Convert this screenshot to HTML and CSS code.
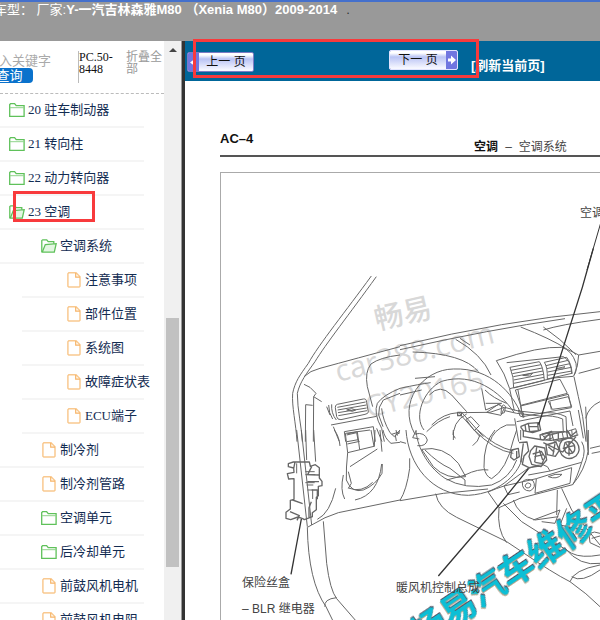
FILE: index.html
```html
<!DOCTYPE html>
<html lang="zh-CN">
<head>
<meta charset="utf-8">
<title>森雅M80 空调</title>
<link rel="stylesheet" href="styles.css">
</head>
<body>
<svg class="defs" aria-hidden="true">
  <symbol id="folder" viewBox="0 0 16 14">
    <path d="M.7 12.5V1.6L1.6.7h4l1.6 2h7.9v10.6H.7z" fill="#fff" stroke="#5fc15a" stroke-width="1.3"/>
    <path d="M1 4.7h14" stroke="#8fd48b"/>
  </symbol>
  <symbol id="folder-open" viewBox="0 0 16 14">
    <path d="M.8 13V1.5L1.7.8h4l1.5 1.9h5.6v2" fill="#fff" stroke="#5fc15a" stroke-width="1.3"/>
    <path d="M1.2 13.2L4.3 5.6l10.9-.9-1.9 8.5z" fill="#e3f6e2" stroke="#5fc15a" stroke-width="1.3"/>
  </symbol>
  <symbol id="file" viewBox="0 0 14 16">
    <path d="M1.8.8H9l4 4v9.4l-.9.9H1.8l-.9-.9V1.7z" fill="#fff" stroke="#f9c990" stroke-width="1.5"/>
    <path d="M8.7 1v4.2H13" fill="none" stroke="#f7b467" stroke-width="1.2"/>
  </symbol>
</svg>
<header class="topbar">
  <h1 class="title">车型： 厂家:<b>Y-一汽吉林森雅M80 （Xenia M80）2009-2014</b><span class="dot">.</span></h1>
</header>
<main class="frames">
  <aside class="sidebar">
    <div class="pane">
      <form class="search">
        <div class="query">
          <input class="keyword" type="text" aria-label="关键字" placeholder="输入关键字">
          <button class="go" type="button">查询</button>
        </div>
        <span class="code">PC.50-8448</span>
        <a class="fold" href="#">折叠全部</a>
      </form>
      <ul class="tree">
        <li class="node"><svg class="icon"><use href="#folder"/></svg><a href="#">20 驻车制动器</a></li>
        <li class="node"><svg class="icon"><use href="#folder"/></svg><a href="#">21 转向柱</a></li>
        <li class="node"><svg class="icon"><use href="#folder"/></svg><a href="#">22 动力转向器</a></li>
        <li class="node"><svg class="icon"><use href="#folder-open"/></svg><a href="#">23 空调</a><span class="mark mark-node"></span></li>
        <li class="node second"><svg class="icon"><use href="#folder-open"/></svg><a href="#">空调系统</a></li>
        <li class="node third"><svg class="icon"><use href="#file"/></svg><a href="#">注意事项</a></li>
        <li class="node third"><svg class="icon"><use href="#file"/></svg><a href="#">部件位置</a></li>
        <li class="node third"><svg class="icon"><use href="#file"/></svg><a href="#">系统图</a></li>
        <li class="node third"><svg class="icon"><use href="#file"/></svg><a href="#">故障症状表</a></li>
        <li class="node third"><svg class="icon"><use href="#file"/></svg><a href="#">ECU端子</a></li>
        <li class="node second"><svg class="icon"><use href="#file"/></svg><a href="#">制冷剂</a></li>
        <li class="node second"><svg class="icon"><use href="#file"/></svg><a href="#">制冷剂管路</a></li>
        <li class="node second"><svg class="icon"><use href="#folder"/></svg><a href="#">空调单元</a></li>
        <li class="node second"><svg class="icon"><use href="#folder"/></svg><a href="#">后冷却单元</a></li>
        <li class="node second"><svg class="icon"><use href="#file"/></svg><a href="#">前鼓风机电机</a></li>
        <li class="node second"><svg class="icon"><use href="#file"/></svg><a href="#">前鼓风机电阻</a></li>
      </ul>
    </div>
    <div class="scroll"><span class="up"></span><span class="thumb"></span></div>
  </aside>
  <section class="content">
    <nav class="toolbar">
      <button class="pager prev" type="button"><svg class="arrow" viewBox="0 0 11 16"><path d="M8 4L2 8.500l6 4.500z" fill="#fff"/></svg><span class="word">上一 页</span></button>
      <button class="pager next" type="button"><span class="word">下一 页</span><svg class="arrow" viewBox="0 0 11 16"><path d="M2 6.500h3V3.500L10 8l-5 4.500V9.500H2z" fill="#fff"/></svg></button>
      <a class="refresh" href="#">[刷新当前页]</a>
      <span class="mark mark-pager"></span>
    </nav>
    <article class="sheet">
      <header class="heading"><strong class="number">AC–4</strong><span class="chapter"><b>空调</b> –  空调系统</span></header>
      <figure class="figure">
        <svg class="drawing" viewBox="221 173 379 447" preserveAspectRatio="xMinYMin slice" role="img" aria-label="空调部件位置">
          <g class="ghost">
            <text x="377" y="330" font-size="29" transform="rotate(-13 377 330)">畅易</text>
            <text x="338" y="382" font-size="30" transform="rotate(-14 338 382)">car388.com</text>
            <text x="368" y="418" font-size="30" transform="rotate(-14 368 418)">CY20165</text>
          </g>
          <!-- left pillar, dash edge and left vent -->
          <g class="ink" transform="translate(200 250) scale(.33333)">
            <path d="M514 78C440 180 355 285 325 340C300 375 285 395 278 430C275 470 288 520 291 575"/>
            <path d="M529 80C450 190 375 285 345 335C320 370 300 395 292 430C292 480 305 530 307 575"/>
            <path d="M312 380Q330 362 360 355Q470 325 600 290M312 403L330 412 348 430 341 440 365 455M341 440L340 575M316 575L317 464 338 466"/>
            <path d="M600 315Q540 322 513 342Q494 365 502 410L518 470"/>
            <path d="M600 415Q550 435 532 460Q520 490 545 535L553 575M600 430L550 450 Q534 470 536 495L549 530"/>
            <path d="M412 463L490 447Q500 445 500 458L505 486Q505 491 495 493L423 509Q412 510 410 500L406 473Q405 465 412 463zM412 472L497 456M413 480L499 465M414 488L500 474M415 497L501 482M440 480l15-4 12 4-10 4zM395 463Q393 490 409 510M386 465Q386 490 398 507M380 470L390 495M393 525L530 499M400 530L418 575M433 545L520 530 526 575M433 545L437 575M440 555l30-7 5 27M530 535l16 40"/>
            <path d="M545 475Q548 510 570 548L583 560 600 540M600 548l-14 8 3 17"/>
          </g>
          <!-- windscreen base, wheel rim, centre vents and stack -->
          <g class="ink" transform="translate(400 250) scale(.33333)">
            <path d="M0 287Q310 212 600 185M0 299Q270 238 495 206M362 231Q450 265 502 298L536 315 600 304M430 231Q480 265 528 314M430 240Q480 224 600 208M167 268Q245 312 273 375M180 265L210 285M38 306Q190 310 235 365M0 415Q60 402 92 398M0 435L65 420M45 385L105 380"/>
            <path d="M45 553C-10 455 70 358 160 357C275 352 340 435 362 490"/>
            <path d="M72 540C40 500 70 420 125 394C220 365 300 425 342 487"/>
            <path d="M88 435Q120 400 155 435L200 485M95 525Q130 490 175 488L270 487 314 472M80 545Q115 510 150 500M178 490L240 560M185 487L250 560M198 508l15-8 25 27-15 15zM160 570Q155 515 200 492M245 415l12 65 48-20-48 0M255 420q25 25 65 40M270 575Q280 540 320 525L345 525"/>
            <path d="M289 332Q420 288 485 292Q515 300 528 340Q532 365 520 379L460 384 329 416Q315 370 289 332zM320 338L490 320Q512 330 516 372M330 352L418 335Q430 350 433 391L341 414Q342 380 330 352zM433 337L500 322Q515 342 516 370L442 387Q443 350 433 337zM333 361L423 344M337 371L427 354M340 380L429 363M341 390L431 373M341 400L432 382M438 347L504 331M440 356L510 341M443 366L514 352M443 376L516 363M368 376l30-6-9 8zM468 356l27-6-8 7z"/>
            <path d="M346 420L480 388 502 430 362 466zM362 468L505 433 514 473 368 500zM445 454l60-14 10 30-58 8zM450 455l4 24M354 420l14 80M329 417l14 65M522 380Q535 440 548 500L558 575M535 480l15 85M557 505Q566 470 600 455M557 470l5 105M536 315Q535 350 522 376M536 370L600 353"/>
            <path d="M314 472L355 483 420 490Q465 483 498 500L500 548M315 482L350 490 420 498Q460 495 488 507L490 548M305 470q5-10 12 0l-4 18-10 3zM260 487l35-24 18 11-10 22zM355 480l15 8 2 14-12-4z"/>
            <path stroke-width="4" d="M363 529l22-9 32-2 5 22-24 8-28-6-7-9zM375 523l3 22M385 520l4 25 26-3-2-23M388 530h25"/>
            <path d="M344 505l12 70M350 515l160-32 9 45M425 552l30-8 3 20-20 5zM456 552l30-7 5 23-29 6zM505 543l22-7 5 18-20 8zM515 540l2 17M430 560l65-16M475 575l60-20"/>
            <path class="leader" d="M580 -5L547 112 416 524"/>
            <path d="M173 487h11v10h-11z" stroke-width="4"/>
          </g>
          <!-- fuse box, kick panel and left duct -->
          <g class="ink" transform="translate(200 430) scale(.33333)">
            <path d="M290 0L322 290M304 0L335 285M317 0L320 90M341 0L347 95M403 0Q418 20 420 48M436 10L510 0M436 10L443 68 522 49 513 0M441 35l34-6M442 42l37-8M440 12l32-7 7 54M443 68q-5 45-4 82Q455 190 490 180Q527 165 546 130L547 102M525 0l-2 50M540 0l6 65M532 57L450 110M600 210L415 248Q375 260 335 285L322 292M407 175Q390 250 352 268M430 135Q420 180 434 207M445 125l9 35-9 15M518 157Q485 190 445 174M545 102Q535 195 465 210M549 0q5 25 24 40l27-3M575 13l25-8M588 0l4 17"/>
            <path stroke-width="4" d="M265 101l15-5 48 0 3 13 15-5 12 9v31l8 10v13l-11 2v28l-6 5v37l-12 9v12l-24 9-5-3-14-5-22 8-14-4 0-18 13-10V211l11-3V146l-16 1-4-16 20-4-1-13-16-4zM285 96l-4 20M278 210l30 11M270 245l28 12-7 14M335 110l-12 24 34 1M322 155h35M335 180h17v28M334 215l-7 18v30"/>
            <path d="M316 125h28M316 134h30M316 158h28M320 165h20M322 180h16v27M290 100v30"/>
            <path class="leader" d="M304 267L273 433"/>
            <path d="M322 292Q325 455 378 530L400 575M370 274L380 400Q390 480 410 506L470 575M375 531Q370 507 410 503"/>
          </g>
          <!-- lower wheel, steering column, heater controls and console -->
          <g class="ink" transform="translate(400 430) scale(.33333)">
            <path d="M18 0C25 105 95 195 205 196C310 190 360 120 366 85M48 0C50 40 75 105 135 145Q195 180 275 165Q330 145 350 90M29 85L29 115Q20 180 0 211M0 212L130 190 264 177M0 35l18 5M45 12Q75 5 82 30Q78 50 52 47M48 3l-10 20 20 4"/>
            <path d="M65 58Q130 45 175 100L197 140Q140 150 100 110zM75 60Q115 100 150 115L195 150v15M195 135Q235 115 265 120M140 150l57-15M160 0q-5 15 6 25M240 15q-5 20-22 32"/>
            <path d="M285 0Q250 40 252 112Q257 140 275 146Q320 120 340 30L350 0M223 0Q280 60 340 70M233 0Q285 50 340 63M362 0v30M560 0l4 65Q555 120 518 164M565 0v75M570 55l30-7M575 70l25-5"/>
            <path stroke-width="4" d="M370 0v20l60 10 25-27M357 38l24-2 5 27-14 15-5 25 20 10 30-5M335 60l20-5 3 25-16 10-10-8zM370 40l-8 57M350 63v22M392 62l12-14 30 6 6 36-17 20-28-7-8-24zM398 72l26-8 11 17-9 20-20-4M410 52l-6 45M418 60l10 30M403 80l28-6M438 45l30-9 10 25-12 18-24-5zM445 50l18 17M465 40l-6 35M487 30q25-15 44 8Q545 60 528 78Q505 95 485 74Q470 50 487 30zM495 38q18-9 28 7 7 26-18 26-19-8-10-33zM507 34v43M488 55l37-9M498 40l21 31M420 15l35-9 45-1 3 18-50 8-31-2zM450 10v20M475 6v20M500 0l13 18 18-15M430 38l58 28 40-46"/>
            <path d="M387 115Q440 90 450 123L385 135M450 123L545 97Q560 60 545 35M545 97Q530 145 518 164L360 205 297 233 264 186Q290 175 312 168L384 115M409 146L515 113 510 160 405 190zM312 168L409 146M312 168l12 26 35-8M367 155q15-12 32-3 12 20-9 31-25 0-23-28zM375 168q5-14 17-6 2 12-12 12zM445 140q20-10 41-7-15 17-41 7"/>
            <path d="M297 233Q290 300 320 338M107 191Q115 235 170 262L320 335 365 365Q460 430 510 455Q560 490 600 530M310 220L365 275 515 370Q545 385 600 375M340 210Q355 255 405 270L475 260M400 270L480 240 465 280 425 275M472 180l-2 75M485 175L515 240 600 345M500 235l-20 50 70 15M495 355Q540 410 600 400M510 455Q520 420 600 405M515 440q30 20 85-20M600 310q-40-15-30 28l30 14M575 325l25-7"/>
            <path class="leader" d="M386 115L295 228 115 438"/>
          </g>
          <path class="leader" d="M601 222L587 270"/>
          <text class="stamp" x="422" y="648" font-size="35" transform="rotate(-34 422 648)">畅易汽车维修平台</text>
          <g class="callout">
            <text x="580" y="217" font-size="12">空调</text>
            <text x="242" y="587" font-size="12">保险丝盒</text>
            <text x="242" y="613" font-size="12">– BLR 继电器</text>
            <text x="396" y="592" font-size="12">暖风机控制总成</text>
          </g>
        </svg>
      </figure>
    </article>
  </section>
</main>
</body>
</html>
```
FILE: styles.css
```css
* { box-sizing: border-box; }
body {
  margin: 0;
  height: 100vh;
  display: flex;
  flex-direction: column;
  overflow: hidden;
  background: #fff;
  font: 13px/16px "Liberation Serif", "Noto Sans CJK SC", serif;
}
a { color: inherit; text-decoration: none; }
button { border: 0; padding: 0; margin: 0; font: inherit; }
.defs { display: none; }

.topbar {
  flex: none;
  height: 41px;
  border-top: 2px solid #4470cc;
  background: #999;
  color: #fff;
}
.title {
  margin: 0 0 0 -6px;
  font: 13px/16px "Liberation Sans", "Noto Sans CJK SC", sans-serif;
  white-space: pre;
}
.dot { margin-left: 9px; color: #333; }

.frames { flex: 1; min-height: 0; display: flex; }
.sidebar {
  flex: none;
  width: 185px;
  display: flex;
  border-right: 3px solid #333;
  overflow: hidden;
}
.pane { flex: 1; min-width: 0; overflow: hidden; }
.search {
  height: 53px;
  display: flex;
  align-items: flex-start;
  padding-top: 10px;
  border-bottom: 1px dashed #bbb;
}
.query { width: 78px; margin-left: -14px; padding-top: 2px; display: flex; flex-direction: column; align-items: flex-start; }
.keyword {
  width: 78px;
  height: 15px;
  padding: 0;
  border: 0;
  background: none;
  font: inherit;
}
.keyword::placeholder { color: #aaa; opacity: 1; }
.go {
  width: 47px;
  height: 15px;
  border-radius: 4px;
  background: #0a72cc;
  color: #fff;
  line-height: 14px;
}
.code {
  width: 42px;
  margin-left: 14px;
  border-left: 1px solid #bbb;
  height: 32px;
  font-size: 12px;
  line-height: 12px;
  color: #111;
}
.fold { margin-left: 6px; width: 38px; font-size: 12px; line-height: 12px; color: #999; }

.tree { list-style: none; margin: 0; padding: 0; width: 144px; }
.node {
  position: relative;
  display: flex;
  align-items: center;
  gap: 3px;
  height: 34px;
  padding-left: 9px;
  border-bottom: 2px solid #f5f5f5;
  white-space: nowrap;
  color: #132c52;
}
.second { padding-left: 41px; }
.third { margin-left: 22px; padding-left: 44px; }
.icon { flex: none; width: 16px; height: 16px; }
.mark { position: absolute; border: 3px solid #f83a3c; pointer-events: none; }
.mark-node { left: 13px; top: -5px; width: 82px; height: 31px; }

.scroll {
  flex: none;
  width: 18px;
  border-right: 1px solid #999;
  background: #f0f0f0;
  display: flex;
  flex-direction: column;
  align-items: center;
}
.up { margin-top: 7px; border: 4px solid transparent; border-top: 0; border-bottom-color: #444; }
.thumb { width: 13px; height: 43%; margin-top: 266px; background: #c1c1c1; }

.content { flex: 1; min-width: 0; display: flex; flex-direction: column; }
.toolbar {
  position: relative;
  flex: none;
  height: 40px;
  display: flex;
  align-items: flex-start;
  padding: 9px 0 0 2px;
  background: #069;
}
.pager {
  display: flex;
  height: 20px;
  border: 1px solid #7c7cc4;
  border-radius: 2px;
  overflow: hidden;
  background: linear-gradient(#fff, #fff 2px, #b9c3f4 6px, #f6f7ff 17px);
  color: #111;
  font-family: "Liberation Sans", "Noto Sans CJK SC", sans-serif;
  font-size: 12px;
  line-height: 18px;
}
.prev { width: 67px; margin-top: 2px; }
.next { width: 69px; margin-left: 135px; outline: 1px solid #dfe3ff; outline-offset: -1px; }
.word { flex: 1; text-align: center; }
.arrow { flex: none; width: 11px; height: 18px; background: #7076e0; }
.refresh {
  margin: 8px 0 0 13px;
  color: #fff;
  font-family: "Liberation Sans", "Noto Sans CJK SC", sans-serif;
  font-weight: 700;
}
.mark-pager { left: 8px; top: -2px; width: 286px; height: 39px; }

.sheet { flex: 1; min-height: 0; display: flex; flex-direction: column; padding: 50px 0 0 35px; }
.heading {
  display: flex;
  height: 26px;
  border-bottom: 2px solid #555;
  font-family: "Liberation Sans", "Noto Sans CJK SC", sans-serif;
  font-size: 12px;
  color: #444;
}
.number { width: 254px; font-size: 13px; color: #111; }
.chapter { padding-top: 8px; white-space: pre; }
.chapter b { color: #111; padding-right: 4px; }
.figure {
  flex: 1;
  min-height: 0;
  margin: 15px 0 0;
  border: solid #aaa;
  border-width: 1px 0 0 1px;
}
.drawing { display: block; width: 100%; height: 100%; }
.ink { fill: none; stroke: #666; stroke-width: 3; stroke-linejoin: round; }
.leader { fill: none; stroke: #333; }
.ink .leader { stroke-width: 4; }
.ghost {
  fill: #d8d8d8;
  font-family: "Open Sans", "Noto Sans CJK SC", sans-serif;
  font-weight: 500;
}
.callout { fill: #444; font-family: "Liberation Sans", "Noto Sans CJK SC", sans-serif; }
.stamp {
  fill: #0cbfd6;
  font-family: "Noto Sans CJK SC", sans-serif;
  font-weight: 700;
  filter: drop-shadow(-1px 1px 0 #b5a58c) drop-shadow(1px -1px 0 #556);
}
```
